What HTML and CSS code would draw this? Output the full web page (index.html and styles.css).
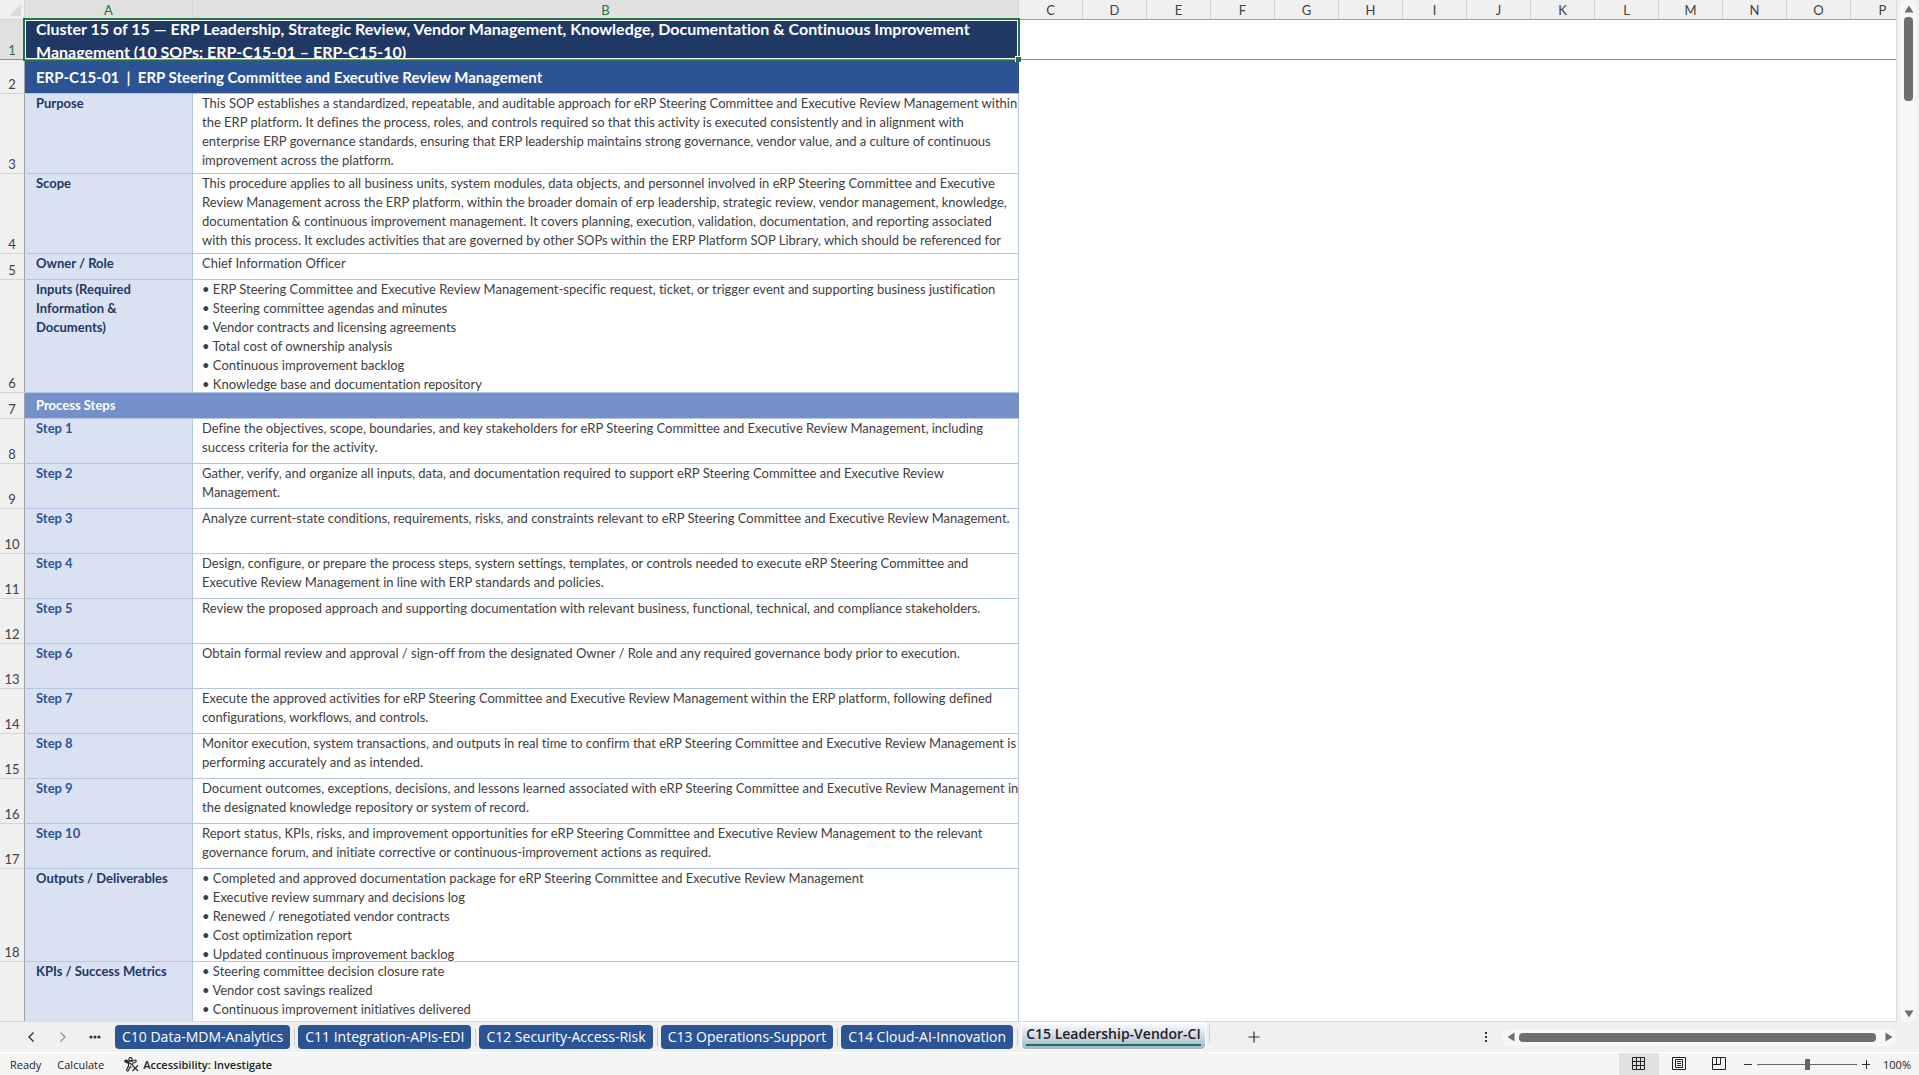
FILE: index.html
```html
<!DOCTYPE html>
<html lang="en">
<head>
    <meta charset="utf-8">
    <title>ERP Platform SOP Library</title>
    <link rel="stylesheet" href="styles.css">
</head>
<body>
    <div class="workspace">
        <main class="sheet">
            <table class="grid">
                <colgroup>
                    <col class="col-num">
                    <col class="col-a">
                    <col class="col-b">
                    <col class="col-std" span="14">
                </colgroup>
                <thead>
                    <tr>
                        <th class="corner"><svg width="12" height="12" viewBox="0 0 12 12"><path d="M12 0V12H0Z" fill="#dadada"/></svg></th>
                        <th class="selected">A</th>
                        <th class="selected">B</th>
                        <th>C</th>
                        <th>D</th>
                        <th>E</th>
                        <th>F</th>
                        <th>G</th>
                        <th>H</th>
                        <th>I</th>
                        <th>J</th>
                        <th>K</th>
                        <th>L</th>
                        <th>M</th>
                        <th>N</th>
                        <th>O</th>
                        <th>P</th>
                    </tr>
                </thead>
                <tbody>
                    <tr class="frozen">
                        <th class="selected">1</th>
                        <td class="cluster" colspan="2">
                            <div class="cell h-title">Cluster 15 of 15 — ERP Leadership, Strategic Review, Vendor Management, Knowledge, Documentation &amp; Continuous Improvement<br>Management (10 SOPs: ERP-C15-01 – ERP-C15-10)</div>
                            <span class="selection"></span>
                            <span class="fill-handle"></span>
                        </td>
                        <td class="empty" colspan="14"></td>
                    </tr>
                    <tr>
                        <th>2</th>
                        <td class="sop" colspan="2"><div class="cell h-sop">ERP-C15-01&nbsp; |&nbsp; ERP Steering Committee and Executive Review Management</div></td>
                        <td class="empty" colspan="14"></td>
                    </tr>
                    <tr>
                        <th>3</th>
                        <td class="label"><div class="cell h-four">Purpose</div></td>
                        <td class="text"><div class="cell h-four">This SOP establishes a standardized, repeatable, and auditable approach for eRP Steering Committee and Executive Review Management within<br>the ERP platform. It defines the process, roles, and controls required so that this activity is executed consistently and in alignment with<br>enterprise ERP governance standards, ensuring that ERP leadership maintains strong governance, vendor value, and a culture of continuous<br>improvement across the platform.</div></td>
                        <td class="empty" colspan="14"></td>
                    </tr>
                    <tr>
                        <th>4</th>
                        <td class="label"><div class="cell h-four">Scope</div></td>
                        <td class="text"><div class="cell h-four">This procedure applies to all business units, system modules, data objects, and personnel involved in eRP Steering Committee and Executive<br>Review Management across the ERP platform, within the broader domain of erp leadership, strategic review, vendor management, knowledge,<br>documentation &amp; continuous improvement management. It covers planning, execution, validation, documentation, and reporting associated<br>with this process. It excludes activities that are governed by other SOPs within the ERP Platform SOP Library, which should be referenced for</div></td>
                        <td class="empty" colspan="14"></td>
                    </tr>
                    <tr>
                        <th>5</th>
                        <td class="label"><div class="cell h-one">Owner / Role</div></td>
                        <td class="text"><div class="cell h-one">Chief Information Officer</div></td>
                        <td class="empty" colspan="14"></td>
                    </tr>
                    <tr>
                        <th>6</th>
                        <td class="label"><div class="cell h-six">Inputs (Required<br>Information &amp;<br>Documents)</div></td>
                        <td class="text"><div class="cell h-six">• ERP Steering Committee and Executive Review Management-specific request, ticket, or trigger event and supporting business justification<br>• Steering committee agendas and minutes<br>• Vendor contracts and licensing agreements<br>• Total cost of ownership analysis<br>• Continuous improvement backlog<br>• Knowledge base and documentation repository</div></td>
                        <td class="empty" colspan="14"></td>
                    </tr>
                    <tr>
                        <th>7</th>
                        <td class="section" colspan="2"><div class="cell h-one">Process Steps</div></td>
                        <td class="empty" colspan="14"></td>
                    </tr>
                    <tr>
                        <th>8</th>
                        <td class="label step"><div class="cell h-two">Step 1</div></td>
                        <td class="text"><div class="cell h-two">Define the objectives, scope, boundaries, and key stakeholders for eRP Steering Committee and Executive Review Management, including<br>success criteria for the activity.</div></td>
                        <td class="empty" colspan="14"></td>
                    </tr>
                    <tr>
                        <th>9</th>
                        <td class="label step"><div class="cell h-two">Step 2</div></td>
                        <td class="text"><div class="cell h-two">Gather, verify, and organize all inputs, data, and documentation required to support eRP Steering Committee and Executive Review<br>Management.</div></td>
                        <td class="empty" colspan="14"></td>
                    </tr>
                    <tr>
                        <th>10</th>
                        <td class="label step"><div class="cell h-two">Step 3</div></td>
                        <td class="text"><div class="cell h-two">Analyze current-state conditions, requirements, risks, and constraints relevant to eRP Steering Committee and Executive Review Management.</div></td>
                        <td class="empty" colspan="14"></td>
                    </tr>
                    <tr>
                        <th>11</th>
                        <td class="label step"><div class="cell h-two">Step 4</div></td>
                        <td class="text"><div class="cell h-two">Design, configure, or prepare the process steps, system settings, templates, or controls needed to execute eRP Steering Committee and<br>Executive Review Management in line with ERP standards and policies.</div></td>
                        <td class="empty" colspan="14"></td>
                    </tr>
                    <tr>
                        <th>12</th>
                        <td class="label step"><div class="cell h-two">Step 5</div></td>
                        <td class="text"><div class="cell h-two">Review the proposed approach and supporting documentation with relevant business, functional, technical, and compliance stakeholders.</div></td>
                        <td class="empty" colspan="14"></td>
                    </tr>
                    <tr>
                        <th>13</th>
                        <td class="label step"><div class="cell h-two">Step 6</div></td>
                        <td class="text"><div class="cell h-two">Obtain formal review and approval / sign-off from the designated Owner / Role and any required governance body prior to execution.</div></td>
                        <td class="empty" colspan="14"></td>
                    </tr>
                    <tr>
                        <th>14</th>
                        <td class="label step"><div class="cell h-two">Step 7</div></td>
                        <td class="text"><div class="cell h-two">Execute the approved activities for eRP Steering Committee and Executive Review Management within the ERP platform, following defined<br>configurations, workflows, and controls.</div></td>
                        <td class="empty" colspan="14"></td>
                    </tr>
                    <tr>
                        <th>15</th>
                        <td class="label step"><div class="cell h-two">Step 8</div></td>
                        <td class="text"><div class="cell h-two">Monitor execution, system transactions, and outputs in real time to confirm that eRP Steering Committee and Executive Review Management is<br>performing accurately and as intended.</div></td>
                        <td class="empty" colspan="14"></td>
                    </tr>
                    <tr>
                        <th>16</th>
                        <td class="label step"><div class="cell h-two">Step 9</div></td>
                        <td class="text"><div class="cell h-two">Document outcomes, exceptions, decisions, and lessons learned associated with eRP Steering Committee and Executive Review Management in<br>the designated knowledge repository or system of record.</div></td>
                        <td class="empty" colspan="14"></td>
                    </tr>
                    <tr>
                        <th>17</th>
                        <td class="label step"><div class="cell h-two">Step 10</div></td>
                        <td class="text"><div class="cell h-two">Report status, KPIs, risks, and improvement opportunities for eRP Steering Committee and Executive Review Management to the relevant<br>governance forum, and initiate corrective or continuous-improvement actions as required.</div></td>
                        <td class="empty" colspan="14"></td>
                    </tr>
                    <tr>
                        <th>18</th>
                        <td class="label"><div class="cell h-five">Outputs / Deliverables</div></td>
                        <td class="text"><div class="cell h-five">• Completed and approved documentation package for eRP Steering Committee and Executive Review Management<br>• Executive review summary and decisions log<br>• Renewed / renegotiated vendor contracts<br>• Cost optimization report<br>• Updated continuous improvement backlog</div></td>
                        <td class="empty" colspan="14"></td>
                    </tr>
                    <tr>
                        <th></th>
                        <td class="label"><div class="cell h-five">KPIs / Success Metrics</div></td>
                        <td class="text"><div class="cell h-five">• Steering committee decision closure rate<br>• Vendor cost savings realized<br>• Continuous improvement initiatives delivered</div></td>
                        <td class="empty" colspan="14"></td>
                    </tr>
                </tbody>
            </table>
        </main>
        <div class="vscroll">
            <button type="button" aria-label="Scroll up"><svg width="10" height="8" viewBox="0 0 10 8"><path d="M5 0.5L9.5 7.5H0.5Z" fill="#6e6e6e"/></svg></button>
            <div class="vthumb"></div>
            <button type="button" class="end" aria-label="Scroll down"><svg width="10" height="8" viewBox="0 0 10 8"><path d="M5 7.5L9.5 0.5H0.5Z" fill="#6e6e6e"/></svg></button>
        </div>
    </div>

    <nav class="tabbar">
        <div class="tab-nav">
            <button type="button" aria-label="Previous sheets"><svg width="8" height="12" viewBox="0 0 8 12"><path d="M6.5 1.5L2 6L6.5 10.5" fill="none" stroke="#333" stroke-width="1.4"/></svg></button>
            <button type="button" aria-label="Next sheets"><svg width="8" height="12" viewBox="0 0 8 12"><path d="M1.5 1.5L6 6L1.5 10.5" fill="none" stroke="#999" stroke-width="1.4"/></svg></button>
            <button type="button" aria-label="More sheets"><svg width="12" height="4" viewBox="0 0 12 4"><circle cx="2" cy="2" r="1.6" fill="#333"/><circle cx="6" cy="2" r="1.6" fill="#333"/><circle cx="10" cy="2" r="1.6" fill="#333"/></svg></button>
        </div>
        <div class="tabs">
            <button type="button" class="tab">C10 Data-MDM-Analytics</button>
            <button type="button" class="tab">C11 Integration-APIs-EDI</button>
            <button type="button" class="tab">C12 Security-Access-Risk</button>
            <button type="button" class="tab">C13 Operations-Support</button>
            <button type="button" class="tab">C14 Cloud-AI-Innovation</button>
            <button type="button" class="tab active"><span>C15 Leadership-Vendor-CI</span></button>
        </div>
        <button type="button" class="add" aria-label="New sheet"><svg width="12" height="12" viewBox="0 0 12 12"><path d="M6 0.5V11.5M0.5 6H11.5" stroke="#333" stroke-width="1.2"/></svg></button>
        <svg class="grip" width="2" height="10" viewBox="0 0 2 10"><path d="M0 0h2v2H0zM0 4h2v2H0zM0 8h2v2H0z" fill="#333"/></svg>
        <div class="hscroll">
            <button type="button" aria-label="Scroll left"><svg width="8" height="10" viewBox="0 0 8 10"><path d="M0.5 5L7.5 0.5V9.5Z" fill="#6e6e6e"/></svg></button>
            <div class="hthumb"></div>
            <button type="button" aria-label="Scroll right"><svg width="8" height="10" viewBox="0 0 8 10"><path d="M7.5 5L0.5 0.5V9.5Z" fill="#6e6e6e"/></svg></button>
        </div>
    </nav>

    <footer class="status">
        <span>Ready</span>
        <span>Calculate</span>
        <button type="button" class="access">
            <svg width="15" height="15" viewBox="0 0 15 15" fill="none" stroke="#222" stroke-width="1.1">
                <circle cx="6.5" cy="2.3" r="1.7"/>
                <path d="M1 3.4C0.6 4.4 1 5 1.8 5.3L4.5 6.3V8.8L2.6 13C2.6 14.2 3.8 14.4 4.3 13.6L6.4 9.6L7.2 10.8M8.6 8V6.3L11.3 5.3C12.2 5 12.4 4.2 12 3.4C11.6 3 11 3 10.4 3.2L8.2 4.2H4.9L2.6 3.2C2 3 1.4 3 1 3.4Z"/>
                <path d="M8.5 8.5L14 14M14 8.5L8.5 14"/>
            </svg>
            Accessibility: Investigate
        </button>
        <div class="views">
            <button type="button" class="on" aria-label="Normal"><svg width="14" height="14" viewBox="0 0 14 14" fill="none" stroke="#222"><path d="M0.5 0.5H12.5V12.5H0.5ZM4.5 0.5V12.5M8.5 0.5V12.5M0.5 4.5H12.5M0.5 8.5H12.5"/></svg></button>
            <button type="button" aria-label="Page Layout"><svg width="14" height="14" viewBox="0 0 14 14" fill="none" stroke="#222"><path d="M0.5 0.5H13.5V12.5H0.5ZM3.5 2.5H10.5V10.5H3.5ZM5 4.5H9M5 6.5H9M5 8.5H9"/></svg></button>
            <button type="button" aria-label="Page Break Preview"><svg width="14" height="14" viewBox="0 0 14 14" fill="none" stroke="#222"><path d="M0.5 0.5H13.5V12.5H0.5ZM0.5 7.5H8.5V0.5M4.5 0.5V7.5"/></svg></button>
        </div>
        <div class="zoom">
            <button type="button" aria-label="Zoom out"><svg width="10" height="10" viewBox="0 0 10 10"><path d="M1 5.5H9" stroke="#333"/></svg></button>
            <input type="range" min="0" max="100" value="50" aria-label="Zoom">
            <button type="button" aria-label="Zoom in"><svg width="10" height="10" viewBox="0 0 10 10"><path d="M1 5.5H9M5.5 1V10" stroke="#333"/></svg></button>
            <span class="percent">100%</span>
        </div>
    </footer>
</body>
</html>
```
FILE: styles.css
```css
* {
    box-sizing: border-box;
}
body {
    margin: 0;
    height: 100vh;
    display: flex;
    flex-direction: column;
    overflow: hidden;
    background-color: #f0f0f0;
    font-family: "Open Sans", "Noto Sans", sans-serif;
    font-size: 11px;
    color: #222;
}
button {
    margin: 0;
    padding: 0;
    border: none;
    background: none;
    font: inherit;
    color: inherit;
    display: flex;
    align-items: center;
    justify-content: center;
    cursor: pointer;
}

/* sheet */
.workspace {
    flex: 1;
    min-height: 0;
    display: flex;
}
.sheet {
    flex: 1;
    min-width: 0;
    overflow: hidden;
    background-color: #fff;
    border-right: 1px solid #d9d9d9;
    border-bottom: 1px solid #d9d9d9;
}
.grid {
    width: 1915px;
    table-layout: fixed;
    border-collapse: separate;
    border-spacing: 0;
    font-family: Lato, sans-serif;
    font-size: 13px;
    font-variant-ligatures: none;
    line-height: 19px;
    color: #404040;
}
.col-num {
    width: 25px;
}
.col-a {
    width: 168px;
}
.col-b {
    width: 826px;
}
.col-std {
    width: 64px;
}
.grid th,
.grid td {
    padding: 0;
}
.grid th {
    font-weight: normal;
    background-color: #f0f0f0;
}
.grid thead th {
    height: 20px;
    padding-top: 1px;
    line-height: 18px;
    border-right: 1px solid #d4d4d4;
    border-bottom: 1px solid #a0a0a0;
}
.grid thead .corner {
    padding: 4px 3px 0 0;
    text-align: right;
    line-height: 0;
    vertical-align: top;
    border-bottom-color: #d4d4d4;
}
.grid tbody th {
    vertical-align: bottom;
    line-height: 17px;
    border-right: 1px solid #a0a0a0;
    border-bottom: 1px solid #d4d4d4;
}
.grid th.selected {
    background-color: #e0e0e0;
    color: #217346;
}
.grid .frozen > * {
    border-bottom: 1px solid #8c8c8c;
}
.cell {
    padding: 0 11px;
    overflow: hidden;
    white-space: nowrap;
}
.text .cell {
    padding: 0 0 0 9px;
}
.h-one {
    height: 25px;
}
.h-two {
    height: 44px;
}
.h-four {
    height: 79px;
}
.h-five {
    height: 92px;
}
.h-six {
    height: 112px;
}
.h-title {
    height: 39px;
    display: flex;
    align-items: center;
}
.h-sop {
    height: 33px;
    line-height: 34px;
}
.cluster {
    position: relative;
    background-color: #203864;
    color: #fff;
    font-size: 16px;
    font-weight: bold;
    line-height: 23px;
}
.sop {
    background-color: #2c5494;
    color: #fff;
    font-size: 15px;
    font-weight: bold;
    border-bottom: 1px solid #b4c6e7;
}
.section {
    background-color: #7390c8;
    color: #fff;
    font-weight: bold;
    border-bottom: 1px solid #b4c6e7;
}
.section .cell {
    line-height: 25px;
}
.label {
    background-color: #d9e1f2;
    color: #1f3864;
    font-weight: bold;
    border-right: 1px solid #b4c6e7;
    border-bottom: 1px solid #b4c6e7;
}
.step {
    color: #2f5496;
}
.text {
    border-right: 1px solid #b4c6e7;
    border-bottom: 1px solid #b4c6e7;
}
.selection {
    position: absolute;
    inset: -2px -1px -2px -2px;
    border: 2px solid #217346;
    box-shadow: inset 0 0 0 1px #fff;
}
/* freeze pane line runs over the selection border */
.selection::after {
    content: "";
    position: absolute;
    left: 0;
    right: 0;
    bottom: -1px;
    height: 1px;
    background-color: #8c8c8c;
}
.fill-handle {
    position: absolute;
    right: -2px;
    bottom: -3px;
    width: 6px;
    height: 6px;
    background-color: #217346;
    border: 1px solid #fff;
    border-width: 1px 0 0 1px;
}

/* scrollbars */
.vscroll {
    width: 17px;
    margin: 0 2px 0 3px;
    display: flex;
    flex-direction: column;
    align-items: center;
    background-color: #f7f7f7;
    border-radius: 8px;
}
.vscroll button {
    width: 17px;
    height: 17px;
}
.vscroll .end {
    margin-top: auto;
}
.vthumb {
    width: 9px;
    height: 84px;
    background-color: #6e6e6e;
    border-radius: 4px;
}
.hscroll {
    width: 395px;
    height: 17px;
    margin-right: 22px;
    display: flex;
    align-items: center;
    background-color: #f7f7f7;
    border-radius: 8px;
}
.hscroll button {
    width: 17px;
    height: 17px;
}
.hthumb {
    flex: 1;
    height: 9px;
    margin-right: 4px;
    background-color: #6e6e6e;
    border-radius: 4px;
}

/* sheet tabs */
.tabbar {
    height: 31px;
    display: flex;
    align-items: center;
    border-bottom: 1px solid #fff;
}
.tab-nav {
    display: flex;
    padding-left: 15px;
}
.tab-nav button {
    width: 32px;
    height: 24px;
}
.tabs {
    display: flex;
    margin-left: 4px;
}
.tab {
    position: relative;
    height: 24px;
    margin-right: 8px;
    padding: 0 7px;
    border-radius: 4px;
    background-color: #2c5494;
    color: #fff;
    font-size: 14px;
    white-space: nowrap;
}
.tab::after {
    content: "";
    position: absolute;
    right: -5px;
    top: 3px;
    width: 1px;
    height: 18px;
    background-color: #ccc;
}
.tab.active {
    height: 28px;
    margin-top: -3px;
    padding: 0 4px;
    border: 1px solid #fff;
    border-top: none;
    border-radius: 0 0 5px 5px;
    background: linear-gradient(#fff, #a5b4d3);
    color: #222;
    font-weight: 600;
}
.tab.active span {
    line-height: 20px;
    border-bottom: 2px solid #107c41;
}
.add {
    width: 24px;
    height: 24px;
    margin-left: 28px;
}
.grip {
    margin: 0 15px 0 auto;
}

/* status bar */
.status {
    height: 22px;
    display: flex;
    align-items: center;
    padding-left: 10px;
    background-color: #f5f5f5;
}
.status > span {
    margin-right: 16px;
}
.access {
    gap: 4px;
    margin-left: 4px;
    font-weight: 600;
}
.views {
    display: flex;
    align-self: stretch;
    margin-left: auto;
}
.views button {
    width: 40px;
}
.views .on {
    background-color: #e0e0e0;
}
.zoom {
    display: flex;
    align-items: center;
    gap: 4px;
    margin: 0 8px 0 4px;
}
.zoom input {
    appearance: none;
    width: 100px;
    height: 12px;
    margin: 0;
    background: linear-gradient(#666, #666) center / 100% 1px no-repeat;
}
.zoom input::-webkit-slider-thumb {
    appearance: none;
    width: 5px;
    height: 11px;
    background-color: #666;
}
.percent {
    margin-left: 8px;
}
```
